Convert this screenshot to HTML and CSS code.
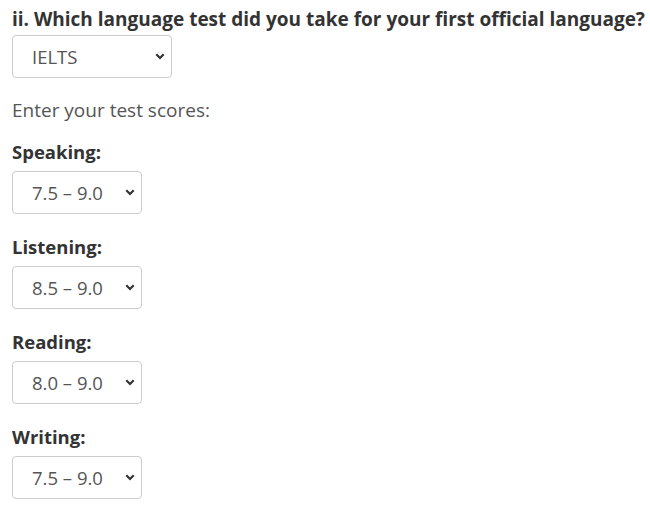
FILE: index.html
```html
<!DOCTYPE html>
<html lang="en">
<head>
<meta charset="utf-8">
<link rel="stylesheet" href="styles.css">
</head>
<body>
<div class="form">
  <h2 class="question">ii. Which language test did you take for your first official language?</h2>
  <div class="select-wrap wide">
    <select class="select"><option>IELTS</option></select>
    <svg class="chev" viewBox="0 0 10 7" width="10" height="7"><path d="M1.3 1.3 L5 5 L8.7 1.3" fill="none" stroke="#333" stroke-width="2.2"/></svg>
  </div>
  <p class="intro">Enter your test scores:</p>
  <div class="group">
    <label class="label">Speaking:</label>
    <div class="select-wrap">
      <select class="select"><option>7.5 – 9.0</option></select>
      <svg class="chev" viewBox="0 0 10 7" width="10" height="7"><path d="M1.3 1.3 L5 5 L8.7 1.3" fill="none" stroke="#333" stroke-width="2.2"/></svg>
    </div>
  </div>
  <div class="group">
    <label class="label">Listening:</label>
    <div class="select-wrap">
      <select class="select"><option>8.5 – 9.0</option></select>
      <svg class="chev" viewBox="0 0 10 7" width="10" height="7"><path d="M1.3 1.3 L5 5 L8.7 1.3" fill="none" stroke="#333" stroke-width="2.2"/></svg>
    </div>
  </div>
  <div class="group">
    <label class="label">Reading:</label>
    <div class="select-wrap">
      <select class="select"><option>8.0 – 9.0</option></select>
      <svg class="chev" viewBox="0 0 10 7" width="10" height="7"><path d="M1.3 1.3 L5 5 L8.7 1.3" fill="none" stroke="#333" stroke-width="2.2"/></svg>
    </div>
  </div>
  <div class="group">
    <label class="label">Writing:</label>
    <div class="select-wrap">
      <select class="select"><option>7.5 – 9.0</option></select>
      <svg class="chev" viewBox="0 0 10 7" width="10" height="7"><path d="M1.3 1.3 L5 5 L8.7 1.3" fill="none" stroke="#333" stroke-width="2.2"/></svg>
    </div>
  </div>
</div>
</body>
</html>
```
FILE: styles.css
```css
html, body {
  margin: 0;
  padding: 0;
  background: #fff;
}
body {
  font-family: "Open Sans", "Noto Sans", sans-serif;
  color: #555;
}
.form {
  padding: 5px 12px 0 12px;
  display: flex;
  flex-direction: column;
  align-items: flex-start;
}
.question {
  margin: 0;
  font-size: 19px;
  line-height: 28px;
  font-weight: 700;
  color: #333;
  white-space: nowrap;
}
.select-wrap {
  position: relative;
  width: 130px;
  height: 43px;
}
.select-wrap.wide {
  width: 160px;
  margin-top: 2px;
}
.select {
  appearance: none;
  -webkit-appearance: none;
  width: 100%;
  height: 100%;
  box-sizing: border-box;
  border: 1px solid #ccc;
  border-radius: 4px;
  background: #fff;
  padding: 0 0 0 19px;
  font-family: "Open Sans", "Noto Sans", sans-serif;
  font-size: 18.5px;
  color: #555;
  margin: 0;
}
.chev {
  position: absolute;
  right: 7px;
  top: 18px;
  pointer-events: none;
}
.intro {
  margin: 19px 0 0 0;
  font-size: 19px;
  line-height: 26px;
  color: #555;
}
.group {
  display: flex;
  flex-direction: column;
  align-items: flex-start;
  margin-top: 16px;
}
.group + .group {
  margin-top: 20px;
}
.label {
  font-size: 18.5px;
  line-height: 26px;
  font-weight: 700;
  color: #333;
  margin-bottom: 6px;
}
```
